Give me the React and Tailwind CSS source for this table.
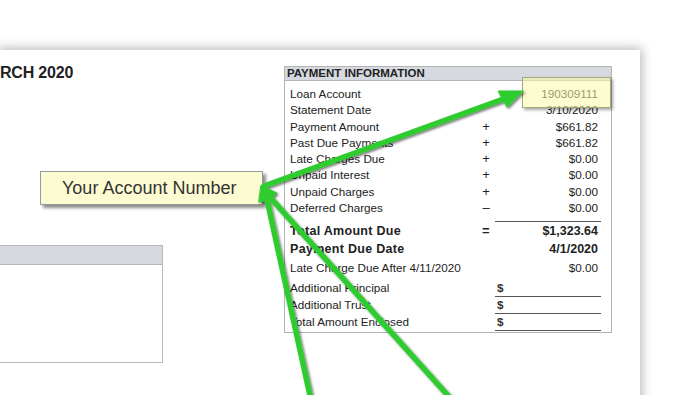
import React from "react";

const rows = [
  { label: "Loan Account", value: "190309111" },
  { label: "Statement Date", value: "3/10/2020" },
  { label: "Payment Amount", sign: "+", value: "$661.82" },
  { label: "Past Due Payments", sign: "+", value: "$661.82" },
  { label: "Late Charges Due", sign: "+", value: "$0.00" },
  { label: "Unpaid Interest", sign: "+", value: "$0.00" },
  { label: "Unpaid Charges", sign: "+", value: "$0.00" },
  { label: "Deferred Charges", sign: "–", value: "$0.00" },
];

const enclosed = ["Additional Principal", "Additional Trust", "Total Amount Enclosed"];

const Arrows = () => (
  <svg className="absolute inset-0 pointer-events-none" width="700" height="395">
    <defs>
      <filter id="arrowShadow" x="-20%" y="-20%" width="140%" height="140%">
        <feDropShadow dx="1.5" dy="1.5" stdDeviation="1.2" floodColor="#000" floodOpacity="0.55" />
      </filter>
    </defs>
    <g filter="url(#arrowShadow)" fill="#2fcc2f" stroke="#2fcc2f" strokeLinecap="round">
      <line x1="264" y1="186" x2="506" y2="98" strokeWidth="5.5" />
      <polygon points="523,91 498,91 507,107" strokeWidth="1" />
      <line x1="266" y1="195" x2="311" y2="400" strokeWidth="5.5" />
      <line x1="268" y1="195" x2="452" y2="400" strokeWidth="5.5" />
      <polygon points="261,186 272,199 259,202" strokeWidth="1" />
      <polygon points="262,186 277,193 268,201" strokeWidth="1" />
    </g>
  </svg>
);

const App = () => {
  return (
    <div className="relative w-[700px] h-[395px] overflow-hidden bg-white font-['Liberation_Sans',Arial,sans-serif] text-[#222]">
      <div className="pt-[50px]">
        <div className="relative w-[640px] h-[360px] bg-white shadow-[0_0_10px_2px_rgba(0,0,0,0.28)] flex">
          {/* left column: statement title and address panel */}
          <div className="w-[284px] flex flex-col">
            <div className="mt-[15px] text-[16px] font-bold leading-[16px] tracking-[-0.2px]">RCH 2020</div>
            <div className="mt-[164px] -ml-[10px] w-[173px] h-[118px] border border-[#b8b8b8]">
              <div className="h-[19px] bg-[#d6dae0] border-b border-[#b8b8b8]" />
            </div>
          </div>

          {/* payment information table */}
          <div className="mt-[16px] w-[328px] h-[267px] border border-[#b4b4b4] self-start">
            <div className="h-[14px] bg-[#d6dae0] border-b border-[#b4b4b4] pl-[2px] text-[11.5px] font-bold leading-[13px]">
              PAYMENT INFORMATION
            </div>
            <div className="pl-[5px] pr-[9px] pt-[5px]">
              {rows.map((r) => (
                <div key={r.label} className="grid grid-cols-[187px_18px_106px] h-[16.3px] text-[11.7px] leading-[16.3px]">
                  <span>{r.label}</span>
                  <span className="text-center text-[13px]">{r.sign}</span>
                  <span className="text-right pr-[3px]">{r.value}</span>
                </div>
              ))}
              <div className="grid grid-cols-[187px_18px_106px] mt-[5px] h-[20px] text-[12.5px] font-bold leading-[20px] tracking-[0.3px]">
                <span>Total Amount Due</span>
                <span className="text-center text-[13px]">=</span>
                <span className="text-right pr-[3px] border-t border-[#555] leading-[19px] tracking-normal">$1,323.64</span>
              </div>
              <div className="grid grid-cols-[187px_18px_106px] h-[17px] text-[12.5px] font-bold leading-[17px] tracking-[0.3px]">
                <span>Payment Due Date</span>
                <span />
                <span className="text-right pr-[3px] tracking-normal">4/1/2020</span>
              </div>
              <div className="grid grid-cols-[187px_18px_106px] h-[22px] text-[11.7px] leading-[20px]">
                <span>Late Charge Due After 4/11/2020</span>
                <span />
                <span className="text-right pr-[3px]">$0.00</span>
              </div>
              {enclosed.map((label) => (
                <div key={label} className="grid grid-cols-[187px_18px_106px] h-[16.7px] text-[11.7px] leading-[16px]">
                  <span>{label}</span>
                  <span />
                  <span className="pl-[2px] border-b border-[#555] font-bold text-[#333]">$</span>
                </div>
              ))}
            </div>
          </div>
        </div>
      </div>

      {/* highlight over the account number */}
      <div className="absolute left-[522px] top-[77px] w-[89px] h-[31px] bg-[rgba(250,250,170,0.55)] border border-[#a8a878] shadow-[2px_2px_3px_rgba(0,0,0,0.35)]" />

      {/* callout label */}
      <div className="absolute left-[40px] top-[171px] w-[223px] h-[34px] bg-[#fdfbd2] border border-[#9a9a9a] shadow-[3px_3px_3px_rgba(0,0,0,0.45)] pl-[21px] text-[18px] leading-[32px] text-[#333]">
        Your Account Number
      </div>

      <Arrows />
    </div>
  );
};

export default App;
